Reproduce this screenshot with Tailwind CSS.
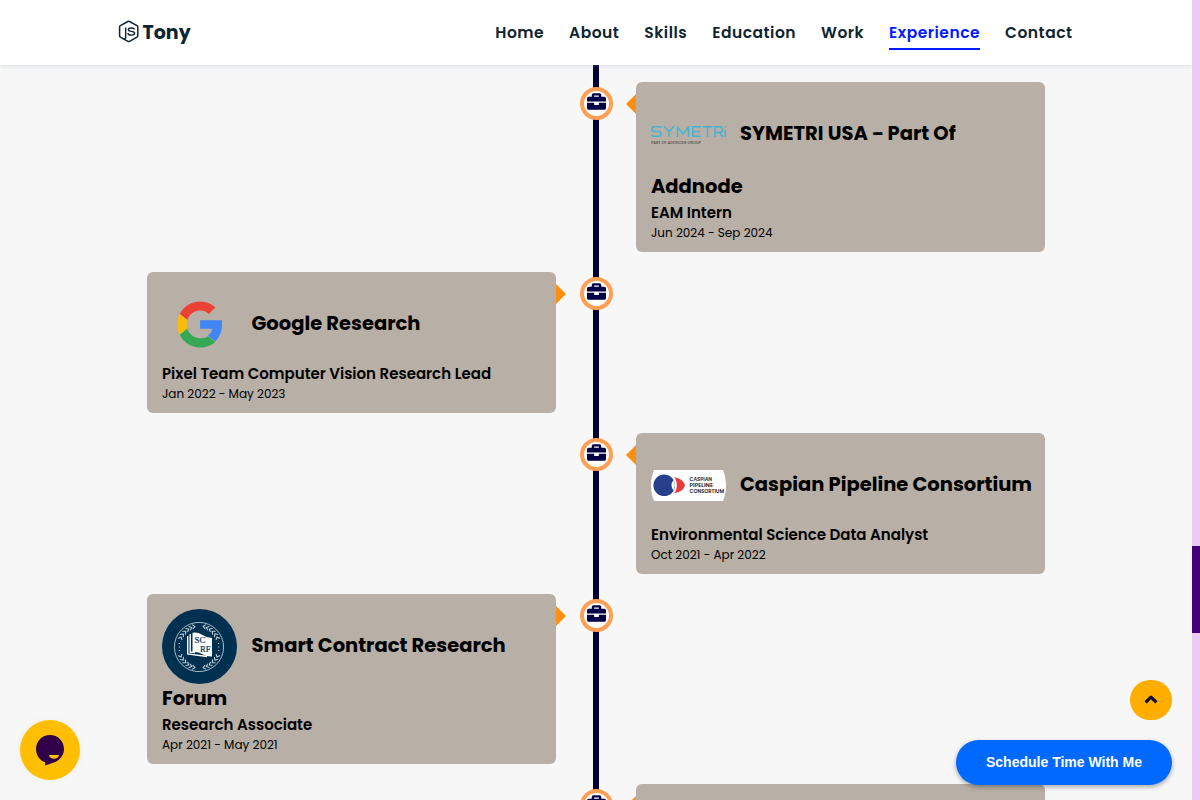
<!DOCTYPE html>
<html lang="en">
<head>
<meta charset="utf-8">
<title>Tony | Experience</title>
<script src="https://cdn.jsdelivr.net/npm/@tailwindcss/browser@4"></script>
</head>
<body class="h-[800px] overflow-hidden bg-[#f7f7f7] font-['Poppins','Inter',sans-serif] text-black">
<svg class="hidden">
  <symbol id="briefcase" viewBox="0 0 512 512">
    <path d="M320 336c0 8.84-7.16 16-16 16h-96c-8.84 0-16-7.16-16-16v-48H0v144c0 25.6 22.4 48 48 48h416c25.6 0 48-22.4 48-48V288H320v48zm144-208h-80V80c0-25.6-22.4-48-48-48H176c-25.6 0-48 22.4-48 48v48H48c-25.6 0-48 22.4-48 48v80h512v-80c0-25.6-22.4-48-48-48zm-144 0H192V96h128v32z"/>
  </symbol>
</svg>
<div class="flex h-full">
  <div class="relative h-full w-[1192px] overflow-hidden">
    <header class="relative z-10 flex h-[65px] items-center justify-between bg-white pl-[118px] pr-[119.5px] text-[#0e2431] shadow-[0_1px_4px_rgba(146,161,176,0.3)]">
      <a class="flex items-center gap-[3.5px] text-[19px] font-bold leading-[30px]">
        <svg class="mb-[3px] h-[23px] w-[21px]" viewBox="0 0 21 23" fill="none" stroke="currentColor" stroke-width="1.5" stroke-linejoin="round">
          <path d="M8.3 20.4 Q7.6 19.9 5.9 19.2 L2.4 17.1 Q1.6 16.6 1.6 15.7 V7 Q1.6 6.2 2.4 5.7 L9.9 1.5 Q10.7 1.1 11.5 1.5 L19 5.7 Q19.8 6.2 19.8 7 V15.8 Q19.8 16.6 19 17.1 L11.5 21.3 Q10.8 21.7 10 21.3 L8.3 20.4"/>
          <path stroke-width="1.4" d="M7.7 7.5 V17 Q7.7 19 5.8 19"/>
          <path stroke-width="1.4" d="M16.3 9.5 Q16.1 8 13.3 8 Q10.3 8 10.3 9.6 Q10.3 11.1 13.3 11.4 Q16.6 11.7 16.6 13.3 Q16.6 15.1 13.4 15.1 Q10 15.1 9.9 13.1"/>
        </svg>
        <span class="mt-px">Tony</span>
      </a>
      <nav class="flex gap-[25px] text-[15.5px] font-semibold leading-[24px] tracking-[0.5px]">
        <a>Home</a><a>About</a><a>Skills</a><a>Education</a><a>Work</a>
        <a class="relative text-[#011aff] after:absolute after:inset-x-0 after:top-[27px] after:h-[2px] after:bg-[#011aff]">Experience</a>
        <a>Contact</a>
      </nav>
    </header>

    <main class="relative ml-[147px] mt-[17px] flex w-[898px] flex-col gap-[20px]">
      <div class="absolute -top-[17px] left-[446px] h-[760px] w-[6px] bg-[#000032]"></div>

      <section class="relative grid grid-cols-[409px_80px_409px]">
        <div class="col-start-2 ml-[24px] mt-[5px] flex size-[33px] items-center justify-center rounded-full border-4 border-[#ff9f55] bg-white text-[#000046]"><svg class="mb-[4px] size-[19px] shrink-0" fill="currentColor"><use href="#briefcase"/></svg></div>
        <article class="relative h-[170px] rounded-[6px] bg-[#b8afa6] px-[15px] pt-[15px]">
          <div class="absolute -left-[10px] top-[12px] h-[20px] w-[10px] bg-[#ff8f0d] [clip-path:polygon(100%_0,0_50%,100%_100%)]"></div>
          <div class="flex h-[75px] items-center gap-[14px] whitespace-nowrap">
            <svg class="size-[75px] shrink-0" viewBox="0 0 75 75">
              <g fill="none" stroke="#45b2cf" stroke-width="1.5">
                <path d="M10.5 30.5 Q9.5 29.7 7.5 29.7 H3.5 Q.8 29.7 .8 32.2 Q.8 34.5 3.5 34.5 H7.4 Q10.2 34.5 10.2 36.8 Q10.2 39.2 7.4 39.2 H3 Q1 39.2 0 38"/>
                <path d="M13 29 L18 35 L23 29 M18 35 V40 M26.5 40 V30 L32 36.8 L37.5 30 V40 M50 29.7 H41.8 V39.2 H50 M41.8 34.5 H49 M51.5 29.7 H61.5 M56.5 29.7 V40 M64 40 V29.7 H69 Q71.5 29.7 71.5 32.5 Q71.5 35.5 69 35.5 H64 M68.5 35.5 L72 40 M74.3 33 V40 M74.3 29 V30.5"/>
              </g>
              <text x="0" y="46.6" font-size="3.6" textLength="50" lengthAdjust="spacingAndGlyphs" fill="#37332f">PART OF ADDNODE GROUP</text>
            </svg>
            <span class="-mt-[2px] text-[19.5px] font-bold leading-[30px]">SYMETRI USA <span class="inline-block w-[11.5px] origin-left scale-x-85">–</span> Part Of</span>
          </div>
          <h3 class="text-[19.5px] font-bold leading-[30px]">Addnode</h3>
          <p class="text-[15px] font-semibold leading-[22px]">EAM Intern</p>
          <p class="text-[12px] leading-[18px]">Jun 2024 - Sep 2024</p>
        </article>
      </section>

      <section class="relative grid grid-cols-[409px_80px_409px]">
        <article class="relative h-[141px] rounded-[6px] bg-[#b8afa6] px-[15px] pt-[15px]">
          <div class="absolute -right-[10px] top-[12px] h-[20px] w-[10px] bg-[#ff8f0d] [clip-path:polygon(0_0,100%_50%,0_100%)]"></div>
          <div class="flex h-[75px] items-center gap-[14.5px] whitespace-nowrap">
            <svg class="size-[75px] shrink-0" viewBox="0 0 75 75">
              <g transform="translate(15.3 14.4) scale(.95 .96)">
                <path fill="#ea4335" d="M24 9.5c3.54 0 6.71 1.22 9.21 3.6l6.85-6.85C35.9 2.38 30.47 0 24 0 14.62 0 6.51 5.38 2.56 13.22l7.98 6.19C12.43 13.72 17.74 9.5 24 9.5z"/>
                <path fill="#4285f4" d="M46.98 19.55H24v9.02h12.94c-.58 2.96-2.26 5.48-4.78 7.18l7.73 6c4.51-4.18 7.09-10.36 7.09-17.65 0-1.57 0-3.07 0-4.55z"/>
                <path fill="#fbbc05" d="M10.53 28.59c-.48-1.45-.76-2.99-.76-4.59s.27-3.14.76-4.59l-7.98-6.19C.92 16.46 0 20.12 0 24c0 3.88.92 7.54 2.56 10.78l7.97-6.19z"/>
                <path fill="#34a853" d="M24 48c6.48 0 11.93-2.13 15.89-5.81l-7.73-6c-2.15 1.45-4.92 2.3-8.16 2.3-6.26 0-11.57-4.22-13.47-9.91l-7.98 6.19C6.51 42.62 14.62 48 24 48z"/>
              </g>
            </svg>
            <span class="-mt-[2px] text-[19.5px] font-bold leading-[30px]">Google Research</span>
          </div>
          <p class="mt-[1px] text-[15px] font-semibold leading-[22px]">Pixel Team Computer Vision Research Lead</p>
          <p class="text-[12px] leading-[18px]">Jan 2022 - May 2023</p>
        </article>
        <div class="ml-[24px] mt-[5px] flex size-[33px] items-center justify-center rounded-full border-4 border-[#ff9f55] bg-white text-[#000046]"><svg class="mb-[4px] size-[19px] shrink-0" fill="currentColor"><use href="#briefcase"/></svg></div>
      </section>

      <section class="relative grid grid-cols-[409px_80px_409px]">
        <div class="col-start-2 ml-[24px] mt-[5px] flex size-[33px] items-center justify-center rounded-full border-4 border-[#ff9f55] bg-white text-[#000046]"><svg class="mb-[4px] size-[19px] shrink-0" fill="currentColor"><use href="#briefcase"/></svg></div>
        <article class="relative h-[141px] rounded-[6px] bg-[#b8afa6] px-[15px] pt-[15px]">
          <div class="absolute -left-[10px] top-[12px] h-[20px] w-[10px] bg-[#ff8f0d] [clip-path:polygon(100%_0,0_50%,100%_100%)]"></div>
          <div class="flex h-[75px] items-center gap-[14px] whitespace-nowrap">
            <svg class="size-[75px] shrink-0" viewBox="0 0 75 75">
              <path fill="#fff" d="M3 22 H72 Q75 29 75 37.5 Q75 46 72 53 H3 Q0 46 0 37.5 Q0 29 3 22 Z"/>
              <path fill="#e53d3c" d="M22 29.3 C28 29.3 33 33 34 37.3 C33 42 28 45 22 45.2 Z"/>
              <ellipse cx="21.8" cy="37.3" rx="4" ry="8.3" fill="#fff"/>
              <circle cx="13.2" cy="37.3" r="10.8" fill="#27408b"/>
              <path fill="#fff" d="M22.6 32 Q18.2 37.3 22.6 42.6 Q25 37.3 22.6 32 Z"/>
              <g font-size="4.5" font-weight="600" fill="#222">
                <text x="38.5" y="32.6" textLength="22.5" lengthAdjust="spacingAndGlyphs">CASPIAN</text>
                <text x="38.5" y="38.7" textLength="23.5" lengthAdjust="spacingAndGlyphs">PIPELINE</text>
                <text x="38.5" y="44.8" textLength="34.5" lengthAdjust="spacingAndGlyphs">CONSORTIUM</text>
              </g>
            </svg>
            <span class="-mt-[2px] text-[19.5px] font-bold leading-[30px]">Caspian Pipeline Consortium</span>
          </div>
          <p class="mt-[1px] text-[15px] font-semibold leading-[22px]">Environmental Science Data Analyst</p>
          <p class="text-[12px] leading-[18px]">Oct 2021 - Apr 2022</p>
        </article>
      </section>

      <section class="relative grid grid-cols-[409px_80px_409px]">
        <article class="relative h-[170px] rounded-[6px] bg-[#b8afa6] px-[15px] pt-[15px]">
          <div class="absolute -right-[10px] top-[12px] h-[20px] w-[10px] bg-[#ff8f0d] [clip-path:polygon(0_0,100%_50%,0_100%)]"></div>
          <div class="flex h-[75px] items-center gap-[14.5px] whitespace-nowrap">
            <svg class="size-[75px] shrink-0" viewBox="0 0 75 75">
              <circle cx="37.5" cy="37.5" r="37.5" fill="#00304f"/>
              <circle cx="37" cy="38" r="24.6" fill="none" stroke="#d3dde3" stroke-width=".8"/>
              <!-- laurel leaves, one quarter mirrored around the ring -->
              <g fill="none" stroke="#c3d0d8" stroke-width="1.1" stroke-linecap="round">
                <path id="laurel" d="M-4 -20.5 l-2.6 -1.6 M-4 -20.5 l-2 2.2 M-7.2 -19.5 l-2.8 -1 M-7.2 -19.5 l-1.6 2.5 M-10.3 -18 l-2.9 -.5 M-10.3 -18 l-1 2.8 M-13.2 -15.8 l-3 0 M-13.2 -15.8 l-.4 2.9 M-15.8 -13.2 l-2.9 .7 M-15.8 -13.2 l.3 2.9 M-18 -10 l-2.6 1.3 M-18 -10 l.9 2.6" transform="translate(37 38)"/>
                <use href="#laurel" transform="translate(74 0) scale(-1 1)"/>
                <use href="#laurel" transform="translate(0 76) scale(1 -1)"/>
                <use href="#laurel" transform="translate(74 76) scale(-1 -1)"/>
              </g>
              <path d="M17.3 34 V42 M56.7 34 V42" stroke="#d3dde3" stroke-width="1" stroke-dasharray="1 2.5"/>
              <path d="M25.7 27 V45 L45 47.5" fill="none" stroke="#fff" stroke-width="1.4"/>
              <path d="M28.2 25 V43 L33 43.5" fill="none" stroke="#fff" stroke-width="1.4"/>
              <path fill="#fff" d="M30.5 23.7 Q36 23 40.5 26 Q45 29 50 29 V47.5 Q44 47.7 40 45 Q36 42.5 30.5 43.2 Z"/>
              <g font-family="Liberation Serif" font-size="9" fill="#00304f" stroke="#00304f" stroke-width=".2">
                <text x="32.5" y="33.5" textLength="11" lengthAdjust="spacingAndGlyphs">SC</text>
                <text x="38" y="43" textLength="10.5" lengthAdjust="spacingAndGlyphs">RF</text>
              </g>
            </svg>
            <span class="-mt-[2px] text-[19.5px] font-bold leading-[30px]">Smart Contract Research</span>
          </div>
          <h3 class="text-[19.5px] font-bold leading-[30px]">Forum</h3>
          <p class="text-[15px] font-semibold leading-[22px]">Research Associate</p>
          <p class="text-[12px] leading-[18px]">Apr 2021 - May 2021</p>
        </article>
        <div class="ml-[24px] mt-[5px] flex size-[33px] items-center justify-center rounded-full border-4 border-[#ff9f55] bg-white text-[#000046]"><svg class="mb-[4px] size-[19px] shrink-0" fill="currentColor"><use href="#briefcase"/></svg></div>
      </section>

      <section class="relative grid grid-cols-[409px_80px_409px]">
        <div class="col-start-2 ml-[24px] mt-[5px] flex size-[33px] items-center justify-center rounded-full border-4 border-[#ff9f55] bg-white text-[#000046]"><svg class="mb-[4px] size-[19px] shrink-0" fill="currentColor"><use href="#briefcase"/></svg></div>
        <article class="relative h-[141px] rounded-[6px] bg-[#b8afa6]">
          <div class="absolute -left-[10px] top-[12px] h-[20px] w-[10px] bg-[#ff8f0d] [clip-path:polygon(100%_0,0_50%,100%_100%)]"></div>
        </article>
      </section>
    </main>

    <button class="absolute bottom-[20px] left-[20px] flex size-[60px] items-center justify-center rounded-full bg-[#ffbf00] shadow-[0_0_8px_rgba(0,0,0,0.04)]">
      <svg class="size-[32px]" viewBox="0 0 32 32">
        <path fill="#300049" d="M16 1 C23.9 1 30 7.2 30 15 C30 22 24.5 27.5 18.5 29 L11.2 31.6 V28.3 C6 26.7 2 21.5 2 15 C2 7.2 8.2 1 16 1 Z"/>
        <path fill="#ffbf00" d="M14.9 21 H25 Q24.3 24.8 20 24.8 Q15.7 24.8 14.9 21 Z"/>
      </svg>
    </button>
    <a class="absolute right-[20px] top-[680px] flex h-[40px] w-[42px] items-center justify-center rounded-[20px] bg-[#ffae00]">
      <svg class="mb-[1px] h-[9px] w-[14px]" viewBox="0 0 14 9" fill="none" stroke="#0c0030" stroke-width="3.2" stroke-linejoin="round"><path d="M1.6 7.4 L7 2.2 L12.4 7.4"/></svg>
    </a>
    <button class="absolute right-[20px] top-[740px] h-[45px] w-[216px] rounded-full bg-[#0069ff] font-['Liberation_Sans',sans-serif] text-[14px] font-bold text-white shadow-[0_2px_5px_rgba(0,0,0,0.33)]">Schedule Time With Me</button>
  </div>
  <div class="h-full w-[8px] bg-[#ebcaf4] pt-[546px]"><div class="h-[87px] bg-[#420177]"></div></div>
</div>
</body>
</html>
